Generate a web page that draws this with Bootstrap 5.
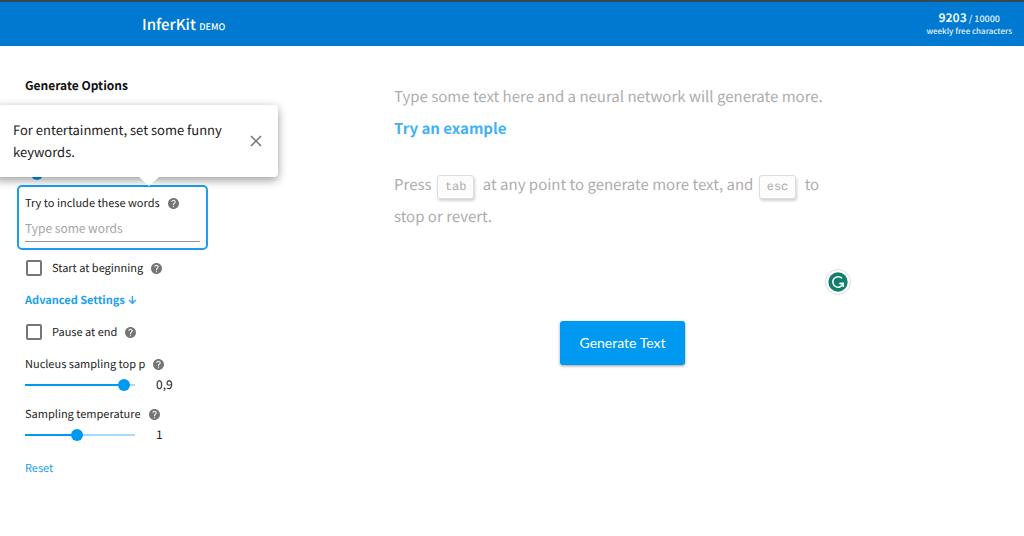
<!DOCTYPE html>
<html lang="en">
<head>
<meta charset="utf-8">
<meta name="viewport" content="width=device-width, initial-scale=1">
<title>InferKit Demo</title>
<link href="https://cdn.jsdelivr.net/npm/bootstrap@5.3.0/dist/css/bootstrap.min.css" rel="stylesheet">
<style>
  :root { --brand: #0099f2; --link: #1a9ff0; --grey: #757575; }
  body { font-family: "Noto Sans CJK SC", "Open Sans", sans-serif; font-size: 11px; line-height: 20px; color: #212121; background: #fff; text-rendering: geometricPrecision; }
  a { color: var(--link); text-decoration: none; }
  .topbar { background: #0079d1; border-top: 2px solid #37474f; height: 46px; padding: 0 12px 0 142px; }
  .brand-name { font-size: 15px; font-weight: 500; line-height: 24px; color: #fff; padding-top: 3px; }
  .brand-tag { font-size: 9px; font-weight: 500; }
  .quota { font-size: 8px; line-height: 13px; color: #e6f3fc; font-weight: 500; }
  .quota-count { font-size: 9px; }
  .quota strong { font-size: 12px; }
  .options { width: 221px; padding: 30px 13px 0 17px; }
  .options > * { margin-left: 8px; }
  .options h1 { font-size: 12px; line-height: 20px; color: #111; }
  .options .length-group { margin-top: 67px; }
  .options .words-box { margin-left: 0; border: 2px solid var(--link); border-radius: 5px; padding: 6px; }
  .words-input { border: 0; border-bottom: 1px solid #949494; border-radius: 0; padding: 0; font-size: 12px; line-height: 20px; height: 29px; width: 100%; outline: 0; background: transparent; }
  .words-input::placeholder { color: #a5a5a5; }
  .tick { appearance: none; width: 16px; height: 16px; border: 2px solid #757575; border-radius: 2px; margin: 0 0 0 1px; flex: none; }
  .tick + label { margin-left: 10px; }
  .tick:checked { background: var(--brand); border-color: var(--brand); }
  .arrow { font-family: Inter, sans-serif; }
  .help { width: 11px; height: 11px; flex: none; }
  .slider { appearance: none; background: transparent; width: 122px; height: 22px; margin: 0 15px 0 -6px; }
  .slider::-webkit-slider-runnable-track {
    height: 12px;
    background: linear-gradient(to right, var(--brand) var(--fill), #a6dbfb var(--fill)) center / calc(100% - 12px) 2px no-repeat;
  }
  .slider::-webkit-slider-thumb { appearance: none; width: 12px; height: 12px; border-radius: 50%; background: var(--brand); }
  .slider + output { font-size: 12px; }
  .hint { top: 105px; left: -6px; width: 284px; padding: 14px 12px 14px 19px; background: #fff; border-radius: 4px; box-shadow: 0 3px 10px rgba(0,0,0,.4); font-size: 13px; line-height: 22px; z-index: 2; }
  .hint::after { content: ""; position: absolute; top: 100%; left: 145px; border: 10px solid transparent; border-top: 9px solid #fff; border-bottom: 0; }
  .hint p { width: 215px; }
  .main-area { padding-top: 35px; }
  .editor { max-width: 457px; min-height: 216px; font-size: 15px; line-height: 32px; color: #adadad; }
  .editor a { color: #41b1f5; }
  .key { display: inline-block; font-family: "Liberation Mono", monospace; font-size: 12px; line-height: 22px; color: #adadad; background: #fcfcfc; border: 1px solid #dedede; border-radius: 3px; padding: 0 7px; margin: 0 5px 0 2px; box-shadow: 1px 2px 3px rgba(0,0,0,.18); }
  .checker { right: 0; bottom: 2px; width: 26px; height: 26px; }
  .generate { background: var(--brand); color: #fff; font-family: Lato, sans-serif; font-size: 14px; line-height: 24px; padding: 10px 20px; border: 0; border-radius: 3px; box-shadow: 0 1px 3px rgba(0,0,0,.4); }
</style>
</head>
<body>
<svg class="d-none" aria-hidden="true">
  <symbol id="help" viewBox="2 2 20 20"><path fill="#757575" d="M12 2C6.480 2 2 6.480 2 12s4.480 10 10 10 10-4.480 10-10S17.520 2 12 2zm1 17h-2v-2h2v2zm2.070-7.750-.9.920C13.450 12.900 13 13.500 13 15h-2v-.5c0-1.100.450-2.100 1.170-2.830l1.240-1.260c.370-.360.590-.860.590-1.410 0-1.100-.9-2-2-2s-2 .9-2 2H8c0-2.210 1.790-4 4-4s4 1.790 4 4c0 .880-.360 1.680-.930 2.250z"/></symbol>
</svg>

<header class="topbar d-flex align-items-center justify-content-between">
  <a href="#" class="brand-name">InferKit <span class="brand-tag">DEMO</span></a>
  <div class="quota text-center"><div class="quota-count"><strong>9203</strong> / 10000</div>weekly free characters</div>
</header>

<div class="d-flex">
  <aside class="options flex-shrink-0">
    <h1 class="fw-bold mb-0">Generate Options</h1>
    <div class="length-group d-flex align-items-center">
      <input id="length" type="range" class="slider" min="0" max="100" value="11" style="--fill:11%" aria-label="Length to generate">
    </div>
    <div class="words-box">
      <label for="words" class="d-flex align-items-center gap-2">Try to include these words <svg class="help"><use href="#help"/></svg></label>
      <input id="words" class="words-input" type="text" placeholder="Type some words">
    </div>
    <div class="d-flex align-items-center mt-2">
      <input id="start" type="checkbox" class="tick">
      <label for="start">Start at beginning</label>
      <svg class="help ms-2"><use href="#help"/></svg>
    </div>
    <div class="mt-2 pt-1"><a href="#" class="fw-bold">Advanced Settings <span class="arrow">↓</span></a></div>
    <div class="d-flex align-items-center mt-2 pt-1">
      <input id="pause" type="checkbox" class="tick">
      <label for="pause">Pause at end</label>
      <svg class="help ms-2"><use href="#help"/></svg>
    </div>
    <div class="mt-2 pt-1">
      <label for="topp" class="d-flex align-items-center gap-2">Nucleus sampling top p <svg class="help"><use href="#help"/></svg></label>
      <div class="d-flex align-items-center">
        <input id="topp" type="range" class="slider" min="0" max="1" step="0.01" value="0.9" style="--fill:90%">
        <output for="topp">0,9</output>
      </div>
    </div>
    <div class="mt-2">
      <label for="temp" class="d-flex align-items-center gap-2">Sampling temperature <svg class="help"><use href="#help"/></svg></label>
      <div class="d-flex align-items-center">
        <input id="temp" type="range" class="slider" min="0.1" max="2" step="0.1" value="1" style="--fill:47%">
        <output for="temp">1</output>
      </div>
    </div>
    <div class="mt-2 pt-1"><a href="#">Reset</a></div>
  </aside>

  <main class="main-area flex-grow-1 d-flex flex-column align-items-center">
    <div class="editor position-relative w-100">
      <p class="mb-0">Type some text here and a neural network will generate more.</p>
      <p class="mb-4"><a href="#" class="fw-bold">Try an example</a></p>
      <p class="mb-0">Press <kbd class="key">tab</kbd> at any point to generate more text, and <kbd class="key">esc</kbd> to stop or revert.</p>
      <svg class="checker position-absolute" viewBox="0 0 26 26" role="img" aria-label="Writing checker">
        <circle cx="13" cy="13" r="12.500" fill="#fff" stroke="#dcdce8"/>
        <circle cx="13" cy="13" r="9.700" fill="#11806a"/>
        <path d="M17 9.300A5.300 5.300 0 1 0 18.200 14.500H14.300" fill="none" stroke="#fff" stroke-width="1.500"/>
        <path d="M14.800 14.500h3.500v3.500" fill="none" stroke="#fff" stroke-width="1.500"/>
      </svg>
    </div>
    <button type="button" class="btn generate mt-4">Generate Text</button>
  </main>
</div>

<div class="hint position-absolute d-flex align-items-center justify-content-between" role="tooltip">
  <p class="mb-0">For entertainment, set some funny keywords.</p>
  <button type="button" class="btn p-0 border-0 lh-1" aria-label="Close">
    <svg width="20" height="20" viewBox="0 0 20 20"><path d="M5 5l10 10M15 5L5 15" stroke="#757575" stroke-width="1.500" fill="none"/></svg>
  </button>
</div>
<script src="https://cdn.jsdelivr.net/npm/bootstrap@5.3.0/dist/js/bootstrap.bundle.min.js"></script>
</body>
</html>
